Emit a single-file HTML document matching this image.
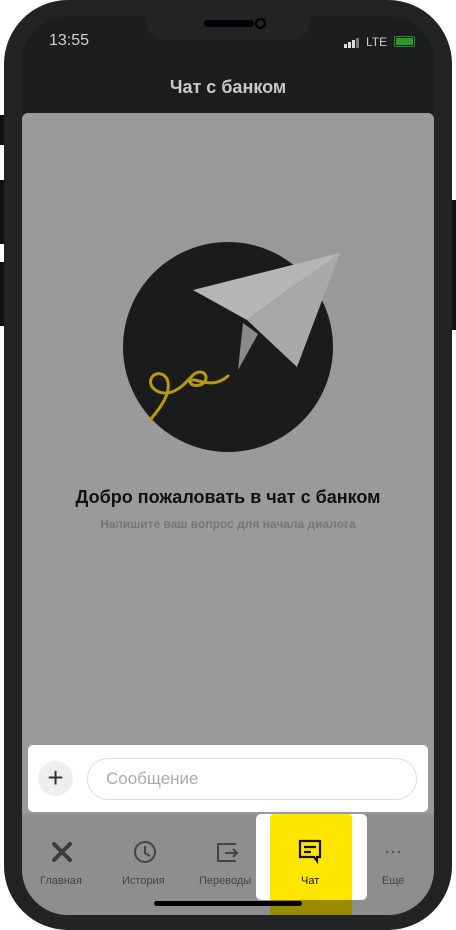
<!DOCTYPE html><html><head><meta charset="utf-8"><style>
*{margin:0;padding:0;box-sizing:border-box}
body{width:456px;height:930px;background:#fff;position:relative;overflow:hidden;font-family:"Liberation Sans","DejaVu Sans",sans-serif}
.phone{position:absolute;left:4px;top:0;width:448px;height:930px;background:#222325;border-radius:64px}
.scr{position:absolute;left:22px;top:16px;width:412px;height:899px;background:#1c1d1f;border-radius:46px;overflow:hidden}
.btn{position:absolute;background:#111;width:5px}
.gray{position:absolute;left:0;top:97px;width:412px;height:802px;background:#9a9a9a;border-radius:6px 6px 0 0}
.abs{position:absolute}
</style></head><body>
<div class="btn" style="left:0;top:115px;height:30px"></div>
<div class="btn" style="left:0;top:180px;height:64px"></div>
<div class="btn" style="left:0;top:262px;height:64px"></div>
<div class="btn" style="left:451px;top:200px;height:130px"></div>
<div class="phone"></div>
<div class="scr">
 <div class="abs" style="left:124px;top:-2px;width:164px;height:26px;background:#222325;border-radius:0 0 18px 18px"></div>
 <div class="abs" style="left:182px;top:4px;width:50px;height:7px;background:#000;border-radius:4px"></div>
 <div class="abs" style="left:233px;top:2px;width:11px;height:11px;border:2px solid #000;border-radius:50%"></div>
 <div class="abs" style="left:27px;top:16px;color:#d0d0d0;font-size:16px">13:55</div>
 <div class="abs" style="left:322px;top:22px;display:flex;align-items:flex-end;gap:1px">
  <i style="width:3px;height:4px;background:#ddd"></i><i style="width:3px;height:6px;background:#ddd"></i><i style="width:3px;height:8px;background:#ddd"></i><i style="width:3px;height:10px;background:#777"></i>
 </div>
 <div class="abs" style="left:344px;top:19px;color:#ccc;font-size:12px">LTE</div>
 <div class="abs" style="left:372px;top:20px;width:21px;height:11px;border:1.5px solid #2a8a2a;border-radius:2px;padding:1px"><div style="width:100%;height:100%;background:#2a9a2a"></div></div>
 <div class="abs" style="left:0;top:61px;width:412px;text-align:center;color:#c8c8c8;font-size:18px;font-weight:bold">Чат с банком</div>
 <div class="gray"></div>
 <svg class="abs" style="left:0;top:0" width="412" height="899">
  <circle cx="206" cy="331" r="105" fill="#1b1b1b"/>
  <polygon points="171,274 318,237 225,304" fill="#b5b5b5"/>
  <polygon points="225,304 318,237 275,351" fill="#a9a9a9"/>
  <polygon points="221,307 236,318 216,354" fill="#8a8a8a"/>
  <path d="M128,404 C140,390 148,378 146,366 C144,356 132,355 129,363 C126,372 138,380 150,376 C160,372 165,365 170,360 C176,354 184,355 184,362 C184,370 170,372 168,366 C170,358 188,376 206,360" fill="none" stroke="#b89a10" stroke-width="3" stroke-linecap="round"/>
 </svg>
 <div class="abs" style="left:0;top:471px;width:412px;text-align:center;color:#111;font-size:18px;font-weight:bold">Добро пожаловать в чат с банком</div>
 <div class="abs" style="left:0;top:501px;width:412px;text-align:center;color:#777;font-size:12px;font-weight:bold">Напишите ваш вопрос для начала диалога</div>
 <div class="abs" style="left:6px;top:729px;width:400px;height:67px;background:#fff;border-radius:5px"></div>
 <div class="abs" style="left:16px;top:745px;width:35px;height:35px;background:#eee;border-radius:50%;text-align:center;line-height:33px;font-size:28px;color:#333">+</div>
 <div class="abs" style="left:65px;top:742px;width:330px;height:42px;border:1px solid #ddd;border-radius:21px;color:#aaa;font-size:17px;line-height:40px;padding-left:18px">Сообщение</div>
 <div class="abs" style="left:0;top:798px;width:412px;height:101px;background:#8e8e8e"></div>
 <div class="abs" style="left:234px;top:798px;width:111px;height:86px;background:#fff;border-radius:5px"></div>
 <div class="abs" style="left:248px;top:798px;width:82px;height:101px;background:#fee600;border-radius:4px 4px 0 0"></div>
 <div class="abs" style="left:248px;top:884px;width:82px;height:15px;background:#9a8b00"></div>
 <svg class="abs" style="left:0;top:820px" width="412" height="36">
  <g stroke="#3a3a3a" stroke-width="4" stroke-linecap="round"><path d="M32,8 L48,24 M48,8 L32,24"/></g>
  <g fill="none" stroke="#444" stroke-width="2"><circle cx="123" cy="16" r="10"/><path d="M123,10 V17 L128,20"/>
  <path d="M214,8 H196 V25 H214 M203,17 H215 M211,13 L215,17 L211,21"/></g>
  <path d="M278,5 H298 V21 H295 V25 L292,21 H278 Z M282,11 H294 M282,16 H289" fill="none" stroke="#111" stroke-width="2.2"/>
  <g fill="#555"><circle cx="365" cy="16" r="1.2"/><circle cx="371" cy="16" r="1.2"/><circle cx="377" cy="16" r="1.2"/></g>
 </svg>
 <div class="abs" style="left:0;top:859px;width:412px;height:16px;font-size:11px;color:#444">
  <span class="abs" style="left:18px">Главная</span><span class="abs" style="left:100px">История</span><span class="abs" style="left:177px">Переводы</span><span class="abs" style="left:279px;color:#111">Чат</span><span class="abs" style="left:360px">Еще</span>
 </div>
 <div class="abs" style="left:132px;top:885px;width:148px;height:5px;background:#000;border-radius:3px"></div>
</div>
</body></html>
